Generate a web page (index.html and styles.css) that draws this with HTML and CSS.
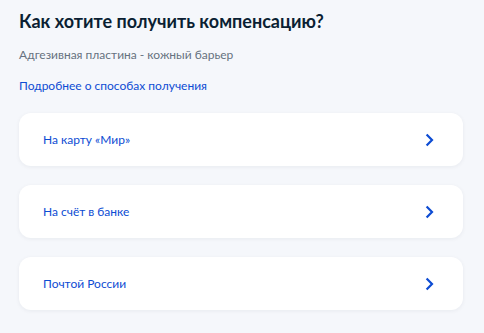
FILE: index.html
```html
<!DOCTYPE html>
<html lang="ru">
<head>
<meta charset="utf-8">
<link rel="stylesheet" href="styles.css">
</head>
<body>
<main class="page">
  <h1 class="title">Как хотите получить компенсацию?</h1>
  <p class="subtitle">Адгезивная пластина - кожный барьер</p>
  <a class="more" href="#">Подробнее о способах получения</a>
  <ul class="options">
    <li class="option"><span class="option-text">На карту «Мир»</span><svg class="chev" width="9" height="14" viewBox="0 0 9 14"><path d="M1.6 1.5 7 7l-5.4 5.5" fill="none" stroke="#0d4cd3" stroke-width="2.2"/></svg></li>
    <li class="option"><span class="option-text">На счёт в банке</span><svg class="chev" width="9" height="14" viewBox="0 0 9 14"><path d="M1.6 1.5 7 7l-5.4 5.5" fill="none" stroke="#0d4cd3" stroke-width="2.2"/></svg></li>
    <li class="option"><span class="option-text">Почтой России</span><svg class="chev" width="9" height="14" viewBox="0 0 9 14"><path d="M1.6 1.5 7 7l-5.4 5.5" fill="none" stroke="#0d4cd3" stroke-width="2.2"/></svg></li>
  </ul>
</main>
</body>
</html>
```
FILE: styles.css
```css
html, body { margin: 0; padding: 0; }
body {
  background: #f5f7fb;
  font-family: Lato, "Noto Sans", sans-serif;
  width: 484px;
  height: 333px;
  overflow: hidden;
}
.page {
  padding: 9px 21px 0 19px;
  display: flex;
  flex-direction: column;
}
.title {
  margin: 0;
  font-size: 18px;
  line-height: 24px;
  font-weight: 700;
  color: #0b1f33;
}
.subtitle {
  margin: 14px 0 0;
  font-size: 12px;
  line-height: 16px;
  color: #66727f;
}
.more {
  margin-top: 15px;
  font-size: 12px;
  line-height: 16px;
  color: #0d4cd3;
  text-decoration: none;
  align-self: flex-start;
}
.options {
  list-style: none;
  margin: 19px 0 0;
  padding: 0;
  display: flex;
  flex-direction: column;
  gap: 19px;
}
.option {
  height: 53px;
  background: #fff;
  border-radius: 12px;
  box-shadow: 0 1px 4px rgba(11, 31, 51, 0.06);
  display: flex;
  align-items: center;
  justify-content: space-between;
  padding: 0 29px 0 24px;
}
.option-text {
  font-size: 12px;
  line-height: 16px;
  color: #0d4cd3;
}
.chev { display: block; }
```
